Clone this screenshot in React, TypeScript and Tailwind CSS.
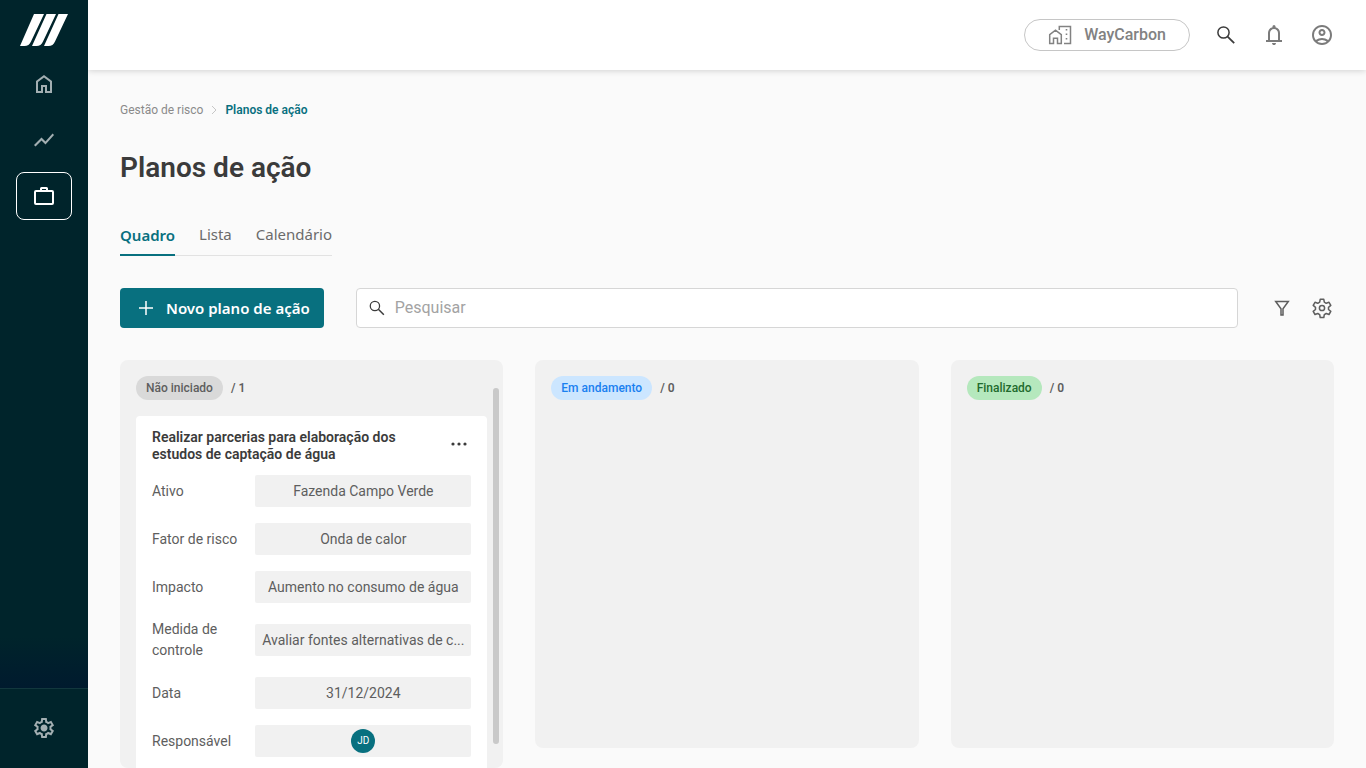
import type { ReactNode } from 'react'

const symbols = {
  home: 'M240-200h120v-240h240v240h120v-360L480-740 240-560v360Zm-80 80v-480l320-240 320 240v480H520v-240h-80v240H160Z',
  bell: 'M160-200v-80h80v-280q0-83 50-147.5T420-792v-28q0-25 17.5-42.5T480-880q25 0 42.5 17.5T540-820v28q80 20 130 84.5T720-560v280h80v80H160Zm320 120q-33 0-56.5-23.5T400-160h160q0 33-23.5 56.5T480-80ZM320-280h320v-280q0-66-47-113t-113-47q-66 0-113 47t-47 113v280Z',
  account:
    'M234-276q51-39 114-61.5T480-360q69 0 132 22.5T726-276q35-41 54.5-93T800-480q0-133-93.5-226.5T480-800q-133 0-226.5 93.5T160-480q0 59 19.5 111t54.5 93Zm246-164q-59 0-99.5-40.5T340-580q0-59 40.5-99.5T480-720q59 0 99.5 40.5T620-580q0 59-40.5 99.5T480-440Zm0 360q-83 0-156-31.5T197-197q-54-54-85.5-127T80-480q0-83 31.5-156T197-763q54-54 127-85.5T480-880q83 0 156 31.5T763-763q54 54 85.5 127T880-480q0 83-31.5 156T763-197q-54 54-127 85.5T480-80Zm0-80q53 0 100-15.5t86-44.5q-39-29-86-44.5T480-280q-53 0-100 15.5T294-220q39 29 86 44.5T480-160Zm0-360q26 0 43-17t17-43q0-26-17-43t-43-17q-26 0-43 17t-17 43q0 26 17 43t43 17Z',
  settings:
    'm370-80-16-128q-13-5-24.5-12T307-235l-119 50L78-375l103-78q-1-7-1-13.5v-27q0-6.5 1-13.5L78-585l110-190 119 50q11-8 23-15t24-12l16-128h220l16 128q13 5 24.5 12t22.5 15l119-50 110 190-103 78q1 7 1 13.5v27q0 6.5-2 13.5l103 78-110 190-118-50q-11 8-23 15t-24 12L590-80H370Zm70-80h79l14-106q31-8 57.5-23.5T639-327l99 41 39-68-86-65q5-14 7-29.5t2-31.5q0-16-2-31.5t-7-29.5l86-65-39-68-99 42q-22-23-48.5-38.5T533-694l-13-106h-79l-14 106q-31 8-57.5 23.5T321-633l-99-41-39 68 86 64q-5 15-7 30t-2 32q0 16 2 31t7 30l-86 65 39 68 99-42q22 23 48.5 38.5T427-266l13 106Zm42-180q58 0 99-41t41-99q0-58-41-99t-99-41q-59 0-99.5 41T342-480q0 58 40.5 99t99.5 41Z',
}

function SymbolIcon({ name }: { name: keyof typeof symbols }) {
  return (
    <svg viewBox="0 -960 960 960" className="size-6" fill="currentColor" aria-hidden="true">
      <path d={symbols[name]} />
    </svg>
  )
}

function LineIcon({ children, className = 'size-6', width = 1.5 }: { children: ReactNode; className?: string; width?: number }) {
  return (
    <svg viewBox="0 0 24 24" className={className} fill="none" stroke="currentColor" strokeWidth={width} aria-hidden="true">
      {children}
    </svg>
  )
}

function Logo() {
  return (
    <svg viewBox="0 0 48 32" className="h-8 w-12" fill="#fff" aria-hidden="true">
      <path d="M14 0h10L11 27.500Q9 32 4.500 32H0Z" />
      <path d="M26.500 0H36L23 27.500Q21 32 16.500 32H12Z" />
      <path d="M38.500 0H48L35 27.500Q33 32 28.500 32H24Z" />
    </svg>
  )
}

function SearchIcon({ className }: { className?: string }) {
  return (
    <LineIcon className={className}>
      <circle cx="9.500" cy="9.500" r="5.600" />
      <path d="m13.600 13.600 6.600 6.600" strokeWidth="1.800" />
    </LineIcon>
  )
}

function Sidebar() {
  return (
    <aside className="z-20 flex w-22 shrink-0 flex-col bg-[#00242b] text-[#a3afb2]">
      <a href="#inicio" aria-label="Início" className="flex justify-center pt-3.5 pb-2.5">
        <Logo />
      </a>
      <nav className="flex flex-1 flex-col items-center gap-2 bg-linear-to-b from-[#00242b] from-92% to-[#001a2e] pt-1">
        <a href="#home" aria-label="Home" className="flex h-12 w-14 items-center justify-center">
          <SymbolIcon name="home" />
        </a>
        <a href="#indicadores" aria-label="Indicadores" className="flex h-12 w-14 items-center justify-center">
          <svg viewBox="0 0 24 24" className="size-6" fill="currentColor" aria-hidden="true">
            <path d="m3.500 18.490 6-6.010 4 4L22 6.920l-1.410-1.410-7.090 7.970-4-4L2 16.990z" />
          </svg>
        </a>
        <a
          href="#planos"
          aria-label="Planos"
          aria-current="page"
          className="flex h-12 w-14 items-center justify-center rounded-lg border border-white text-white"
        >
          <LineIcon width={2}>
            <rect x="3" y="7" width="18" height="13" rx="1" />
            <path d="M9 7V4.500Q9 4 9.500 4h5q.5 0 .5.500V7" />
          </LineIcon>
        </a>
      </nav>
      <div className="flex h-20 items-center justify-center border-t border-[#12373d] pb-0.5">
        <a href="#configuracoes" aria-label="Configurações">
          <SymbolIcon name="settings" />
        </a>
      </div>
    </aside>
  )
}

function Header() {
  return (
    <header className="z-10 flex h-[70px] shrink-0 items-center justify-end gap-6 bg-white px-8 text-[#7b7b7b] shadow-[0_1px_6px_rgba(0,0,0,0.16)]">
      <button className="flex h-8 items-center gap-3 rounded-full border border-[#c6c6c6] px-[23px] text-base font-medium text-[#828282]">
        <LineIcon width={1.5}>
          <path d="M1.700 11.700v8.800h3.800v-5.300h4v5.300h3.800v-8.800L7.500 7.200ZM11.300 7V3.500h11.200v17h-6.500" />
          <path d="M17.700 6.700h1.600M17.700 11.200h1.600M17.700 15.700h1.600" strokeWidth="1.600" />
        </LineIcon>
        WayCarbon
      </button>
      <button aria-label="Buscar" className="text-[#3b3b3b]">
        <SearchIcon className="size-6" />
      </button>
      <button aria-label="Notificações">
        <SymbolIcon name="bell" />
      </button>
      <button aria-label="Conta">
        <SymbolIcon name="account" />
      </button>
    </header>
  )
}

function Column({ label, count, tone, className = '', children }: { label: string; count: number; tone: string; className?: string; children?: ReactNode }) {
  return (
    <section className={`flex min-h-0 rounded-lg bg-[#f1f1f1] ${className}`}>
      <div className="min-w-0 flex-1 overflow-hidden p-4">
        <h2 className="flex items-center gap-2 text-xs font-semibold text-[#5e5e5e]">
          <span className={`rounded-full px-2.5 py-1 font-medium ${tone}`}>{label}</span>/ {count}
        </h2>
        {children}
      </div>
    </section>
  )
}

const fields: [string, ReactNode][] = [
  ['Ativo', 'Fazenda Campo Verde'],
  ['Fator de risco', 'Onda de calor'],
  ['Impacto', 'Aumento no consumo de água'],
  ['Medida de controle', 'Avaliar fontes alternativas de c...'],
  ['Data', '31/12/2024'],
  [
    'Responsável',
    <span className="flex size-6 items-center justify-center rounded-full bg-[#08707f] text-[10px] text-white">JD</span>,
  ],
]

function PlanCard() {
  return (
    <article className="mt-4 rounded bg-white px-4 pt-[13px] pb-4">
      <div className="flex items-center justify-between gap-4">
        <h3 className="max-w-64 text-sm leading-[17px] font-semibold text-[#3b3b3b]">
          Realizar parcerias para elaboração dos estudos de captação de água
        </h3>
        <button aria-label="Mais opções" className="text-[#3b3b3b]">
          <svg viewBox="0 0 24 24" className="size-6" fill="currentColor" aria-hidden="true">
            <circle cx="6" cy="10" r="1.600" />
            <circle cx="12" cy="10" r="1.600" />
            <circle cx="18" cy="10" r="1.600" />
          </svg>
        </button>
      </div>
      <dl className="mt-3 flex flex-col gap-4 text-sm text-[#5e5e5e]">
        {fields.map(([name, value]) => (
          <div key={name} className="flex items-center gap-2">
            <dt className="flex-1 leading-[21px]">{name}</dt>
            <dd className="flex h-8 w-[216px] shrink-0 items-center justify-center rounded-xs bg-[#f1f1f1] whitespace-nowrap">{value}</dd>
          </div>
        ))}
      </dl>
    </article>
  )
}

export default function App() {
  return (
    <div className="flex h-screen overflow-hidden bg-[#fafafa] font-[Roboto,sans-serif]">
      <Sidebar />
      <div className="flex min-w-0 flex-1 flex-col">
        <Header />
        <main className="flex min-h-0 flex-1 flex-col px-8 pt-8">
          <nav aria-label="Trilha" className="flex items-center gap-2 text-xs">
            <a href="#risco" className="text-[#8a8a8a]">Gestão de risco</a>
            <svg viewBox="0 0 6 10" className="h-2.5 w-1.5" fill="none" stroke="#c6c6c6" aria-hidden="true">
              <path d="m1 1 4 4-4 4" />
            </svg>
            <a href="#planos" aria-current="page" className="font-semibold text-[#08707f]">Planos de ação</a>
          </nav>
          <h1 className="mt-8 text-[28px] leading-9 font-semibold text-[#3b3b3b]">Planos de ação</h1>
          <div
            role="tablist"
            className="mt-7 flex gap-6 self-start border-b border-[#e2e2e2] font-['Noto_Sans',sans-serif] text-[15px] text-[#6b6b6b]"
          >
            <button role="tab" aria-selected="true" className="-mb-px h-[42px] border-b-2 border-[#08707f] pt-0.5 font-semibold text-[#08707f]">
              Quadro
            </button>
            <button role="tab" aria-selected="false">Lista</button>
            <button role="tab" aria-selected="false">Calendário</button>
          </div>
          <div className="mt-8 flex items-center">
            <button className="flex h-10 items-center gap-2 rounded bg-[#08707f] px-3.5 font-['Noto_Sans',sans-serif] text-[15px] font-semibold text-white">
              <LineIcon>
                <path d="M12 5v14M5 12h14" />
              </LineIcon>
              Novo plano de ação
            </button>
            <label className="ml-8 flex h-10 flex-1 items-center gap-2 rounded border border-[#d6d6d6] bg-white px-2.5 text-[#3b3b3b]">
              <SearchIcon className="size-5" />
              <input type="text" aria-label="Pesquisar" placeholder="Pesquisar" className="min-w-0 flex-1 text-base outline-none placeholder:text-[#a3a3a3]" />
            </label>
            <button aria-label="Filtrar" className="ml-8 text-[#5e5e5e]">
              <LineIcon>
                <path d="M5.700 5.500h12.600L13 12.800V19h-2v-6.200Z" />
              </LineIcon>
            </button>
            <button aria-label="Configurar quadro" className="ml-4 text-[#5e5e5e]">
              <LineIcon width={1.5}>
                <path
                  strokeLinejoin="round"
                  d="M10.200 3.300h3.600l.5 2.900 1.900 1.100 2.800-1 1.800 3.100-2.300 1.900v2.200l2.300 1.900-1.800 3.100-2.800-1-1.900 1.100-.5 2.900h-3.600l-.5-2.900-1.900-1.100-2.800 1-1.800-3.100 2.300-1.900v-2.200L3.200 9.400 5 6.300l2.800 1 1.900-1.100Z"
                />
                <circle cx="12" cy="12" r="2.600" />
              </LineIcon>
            </button>
          </div>
          <div className="mt-8 grid min-h-0 flex-1 grid-cols-3 gap-8">
            <div className="relative flex min-h-0 min-w-0">
              <Column label="Não iniciado" count={1} tone="bg-[#d9d9d9] text-[#5e5e5e]" className="w-full">
                <PlanCard />
              </Column>
              <div className="absolute top-7 right-1 bottom-6 w-1.5 rounded-full bg-[#c9c9c9]" />
            </div>
            <Column label="Em andamento" count={0} tone="bg-[#cce6ff] text-[#1a80f0]" className="mb-5" />
            <Column label="Finalizado" count={0} tone="bg-[#b5e8bd] text-[#1f6b2e]" className="mb-5" />
          </div>
        </main>
      </div>
    </div>
  )
}
